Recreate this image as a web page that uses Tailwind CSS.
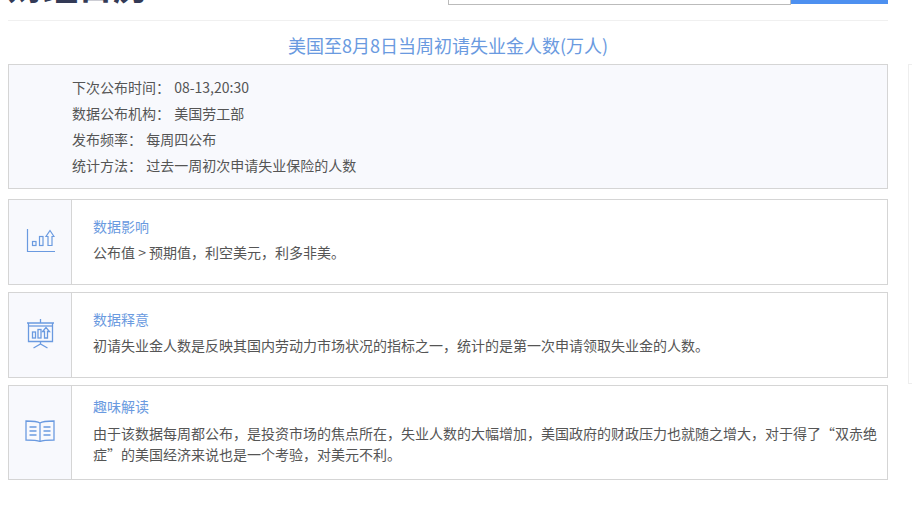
<!DOCTYPE html>
<html lang="zh-CN">
<head>
    <meta charset="UTF-8">
    <title>美国初请失业金人数</title>
    <script src="https://cdn.jsdelivr.net/npm/@tailwindcss/browser@4"></script>
</head>
<body class="bg-white h-[513px] w-[912px] overflow-hidden font-['Noto_Sans_CJK_SC','Liberation_Sans',sans-serif] text-[#555] text-[14px]">
    <div class="relative">
        <div class="ml-2 w-[880px]">
            <div class="h-[21px] overflow-hidden border-b border-[#f0f0f0] flex justify-between">
                <h1 class="text-[35px] leading-[36px] font-bold text-[#333a56] -mt-[33px]">财经日历</h1>
                <div class="flex h-[5px] overflow-hidden">
                    <div class="w-[343px] border border-t-0 border-[#bbb] bg-white"></div>
                    <div class="w-[97px] h-[4px] bg-[#4d90f0]"></div>
                </div>
            </div>

            <h2 class="h-[43px] text-center text-[18px] leading-[48px] text-[#6a9ae0]">美国至8月8日当周初请失业金人数(万人)</h2>

            <div class="h-[125px] border border-[#d5d5d5] bg-[#f8f9fd] pl-[63px] pt-[8.5px] leading-[26.3px]">
                <p>下次公布时间<span class="font-['Noto_Sans_CJK_TC'] mr-px">：</span> 08-13,20:30</p>
                <p>数据公布机构<span class="font-['Noto_Sans_CJK_TC'] mr-px">：</span> 美国劳工部</p>
                <p>发布频率<span class="font-['Noto_Sans_CJK_TC'] mr-px">：</span> 每周四公布</p>
                <p>统计方法<span class="font-['Noto_Sans_CJK_TC'] mr-px">：</span> 过去一周初次申请失业保险的人数</p>
            </div>

            <div class="mt-[10px] h-[86px] flex border border-[#d5d5d5]">
                <div class="w-[63px] shrink-0 bg-[#f8f9fd] border-r border-[#d5d5d5] flex items-center justify-center">
                    <svg width="30" height="24" viewBox="0 0 30 24" fill="none" stroke="#6a9ae0" stroke-width="1.2" class="-mt-[2px]">
                        <path d="M2.500 0v22.500h27.500"/>
                        <rect x="7.500" y="12.500" width="3.500" height="4"/>
                        <rect x="14.500" y="7.500" width="3.500" height="9"/>
                        <path d="M23 16.500v-9h-2l4-6 4 6h-2v9z"/>
                    </svg>
                </div>
                <div class="pl-[21px] pt-[16px]">
                    <h3 class="text-[#6a9ae0] leading-[20px]">数据影响</h3>
                    <p class="mt-[6px] leading-[20px]">公布值 &gt; 预期值，利空美元，利多非美。</p>
                </div>
            </div>

            <div class="mt-[7px] h-[86px] flex border border-[#d5d5d5]">
                <div class="w-[63px] shrink-0 bg-[#f8f9fd] border-r border-[#d5d5d5] flex items-center justify-center">
                    <svg width="28" height="30" viewBox="0 0 28 30" fill="none" stroke="#6a9ae0" stroke-width="1.3" class="-mt-[3px]">
                        <path d="M14.500 0v4M1 4h27M2.500 4v18.500h24V4M14.500 22.500v2.500M7.500 29l7-4 7 4"/>
                        <path d="M2.500 7h24"/>
                        <rect x="6.500" y="13" width="3" height="6"/>
                        <rect x="12" y="10.500" width="3" height="8.500"/>
                        <path d="M18.500 19v-6.500h-2l3.500-4 3.500 4h-2V19z"/>
                    </svg>
                </div>
                <div class="pl-[21px] pt-[16px]">
                    <h3 class="text-[#6a9ae0] leading-[20px]">数据释意</h3>
                    <p class="mt-[6px] leading-[20px]">初请失业金人数是反映其国内劳动力市场状况的指标之一，统计的是第一次申请领取失业金的人数。</p>
                </div>
            </div>

            <div class="mt-[7px] h-[95px] flex border border-[#d5d5d5]">
                <div class="w-[63px] shrink-0 bg-[#f8f9fd] border-r border-[#d5d5d5] flex items-center justify-center">
                    <svg width="30" height="22" viewBox="0 0 30 22" fill="none" stroke="#6a9ae0" stroke-width="1.3" class="-mt-[4px]">
                        <path d="M15 3C12 1 6 1 1 1v19c5 0 11 0 14 1.500 3-1.500 9-1.500 14-1.500V1c-5 0-11 0-14 2zM15 3v18"/>
                        <path d="M4.500 7h7M4.500 11h7M4.500 15h7M18.500 7h7M18.500 11h7M18.500 15h7"/>
                    </svg>
                </div>
                <div class="pl-[21px] pr-2 pt-[10px]">
                    <h3 class="text-[#6a9ae0] leading-[20px]">趣味解读</h3>
                    <p class="mt-[7px] leading-[21px]">由于该数据每周都公布，是投资市场的焦点所在，失业人数的大幅增加，美国政府的财政压力也就随之增大，对于得了“双赤绝症”的美国经济来说也是一个考验，对美元不利。</p>
                </div>
            </div>
        </div>

        <div class="absolute left-[908px] top-[64px] w-[4px] h-[320px] border-l border-t border-b border-[#eeeeee]"></div>
    </div>
</body>
</html>
